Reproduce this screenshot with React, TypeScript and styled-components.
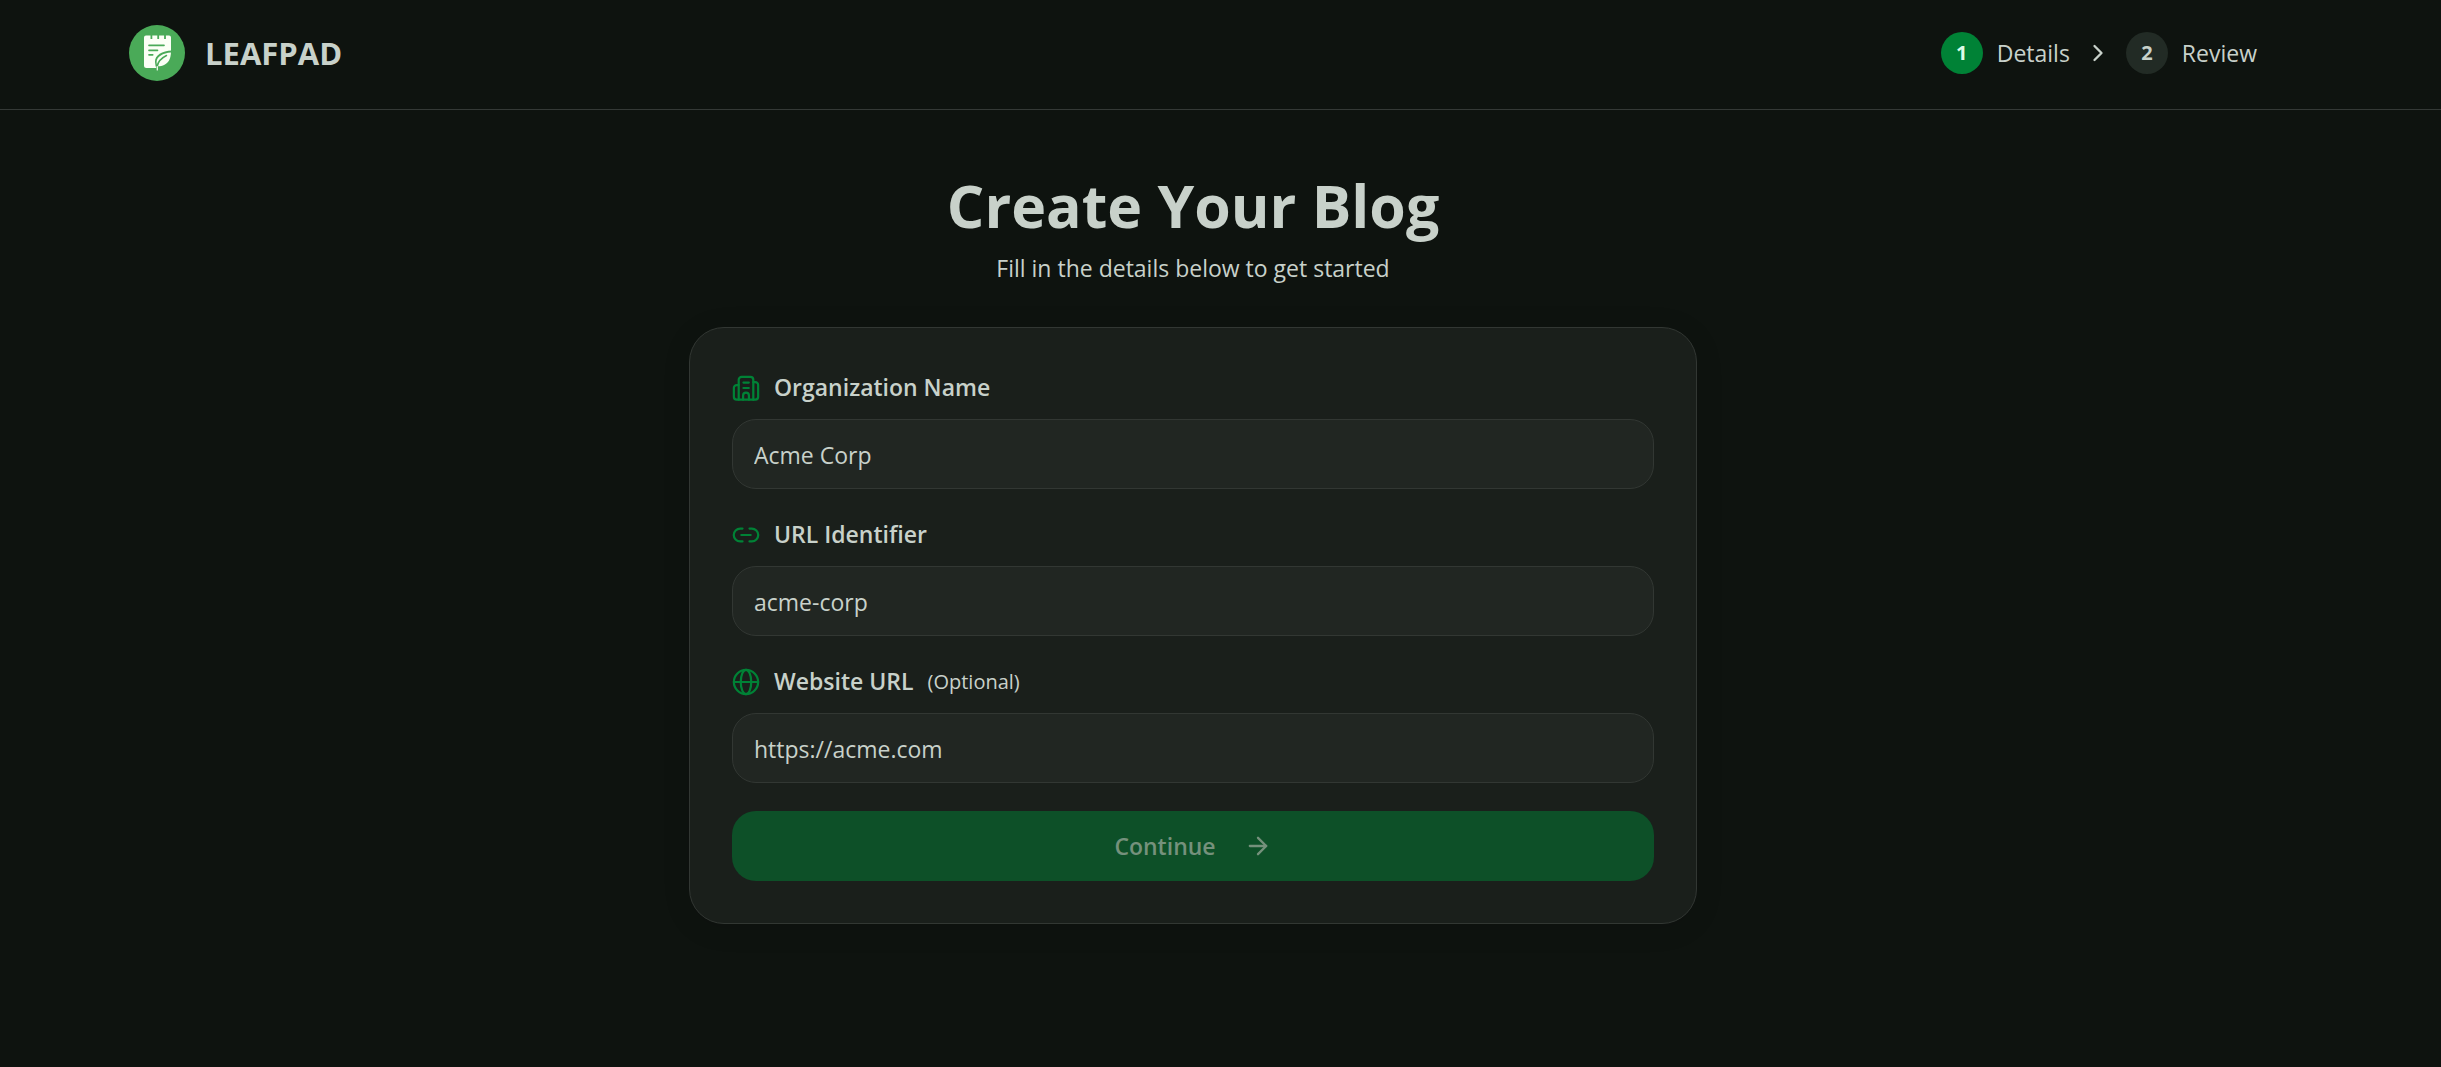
import React from "react";
import styled, { createGlobalStyle } from "styled-components";
import { ArrowRight, ChevronRight } from "lucide-react";

const GlobalStyle = createGlobalStyle`
  *, *::before, *::after { box-sizing: border-box; }
  body {
    margin: 0;
    background: #0e130f;
    color: #c8d1ca;
    font-family: "Open Sans", "Noto Sans", sans-serif;
    font-size: 23px;
  }
`;

const Page = styled.div`
  min-height: 100vh;
`;

const Header = styled.header`
  border-bottom: 1px solid #343936;
  padding: 25px 184px 28px 129px;
`;

const HeaderInner = styled.div`
  display: flex;
  align-items: center;
  justify-content: space-between;
  max-width: 2128px;
  margin: 0 auto;
`;

const Brand = styled.a`
  display: flex;
  align-items: center;
  gap: 20px;
  color: inherit;
  text-decoration: none;
  font-size: 31px;
  line-height: 56px;
  font-weight: 700;
`;

const Steps = styled.ol`
  display: flex;
  align-items: center;
  gap: 14px;
  margin: 0;
  padding: 0;
  list-style: none;
`;

const Step = styled.li`
  display: flex;
  align-items: center;
  gap: 14px;
  line-height: 42px;
`;

const StepNumber = styled.span<{ $active?: boolean }>`
  width: 42px;
  height: 42px;
  border-radius: 50%;
  background: ${(p) => (p.$active ? "#008236" : "#222b25")};
  color: ${(p) => (p.$active ? "#dcfce7" : "#c8d1ca")};
  font-size: 20px;
  font-weight: 700;
  text-align: center;
`;

const Main = styled.main`
  display: flex;
  flex-direction: column;
  align-items: center;
  padding: 60px 55px 56px 0;
`;

const Title = styled.h1`
  margin: 0;
  font-size: 59px;
  line-height: 70px;
  font-weight: 700;
`;

const Subtitle = styled.p`
  margin: 10px 0 41px;
  line-height: 36px;
`;

const Card = styled.form`
  display: flex;
  flex-direction: column;
  gap: 28px;
  width: 100%;
  max-width: 1008px;
  padding: 42px;
  border: 1px solid #323733;
  border-radius: 35px;
  background: #1a1f1b;
  box-shadow: 0 4px 28px rgba(0, 0, 0, 0.12);
`;

const Field = styled.div`
  display: flex;
  flex-direction: column;
  gap: 14px;
`;

const Label = styled.label`
  display: flex;
  align-items: center;
  gap: 14px;
  line-height: 35px;
  font-weight: 600;

  svg { color: #008236; }
`;

const Hint = styled.span`
  font-size: 20px;
  font-weight: 400;
`;

const Input = styled.input`
  width: 100%;
  height: 70px;
  padding: 2px 21px 0;
  border: 1px solid #323733;
  border-radius: 24px;
  background: #212622;
  color: inherit;
  font: inherit;

  &::placeholder { color: #c8d1ca; opacity: 1; }
`;

const Submit = styled.button`
  display: flex;
  align-items: center;
  justify-content: center;
  gap: 28px;
  height: 70px;
  border: 0;
  border-radius: 24px;
  background: #0d5028;
  color: #75917c;
  font: inherit;
  font-weight: 600;
`;

const stroke = {
  width: 28,
  height: 28,
  viewBox: "0 0 24 24",
  fill: "none",
  stroke: "currentColor",
  strokeWidth: 1.9,
  strokeLinecap: "round" as const,
  strokeLinejoin: "round" as const,
  "aria-hidden": true,
};

const BuildingIcon = () => (
  <svg {...stroke}>
    <path d="M5.750 22V5a2.500 2.500 0 0 1 2.500-2.500h7.500a2.500 2.500 0 0 1 2.500 2.500v17" />
    <path d="M5.750 9.500H4A2.400 2.400 0 0 0 1.600 12v7.600A2.400 2.400 0 0 0 4 22h16a2.400 2.400 0 0 0 2.400-2.400V9.500A2.400 2.400 0 0 0 20 7h-1.750" />
    <path d="M9.800 7.300h4.600M9.800 12h4.600M9.500 22v-3.500a2.500 2.500 0 0 1 5 0V22" />
  </svg>
);

const LinkIcon = () => (
  <svg {...stroke}>
    <path d="M9 17.500H7a5.500 5.500 0 0 1 0-11h2M15 6.500h2a5.500 5.500 0 0 1 0 11h-2M8 12h8" />
  </svg>
);

const GlobeIcon = () => (
  <svg {...stroke}>
    <circle cx="12" cy="12" r="10.400" />
    <ellipse cx="12" cy="12" rx="4.500" ry="10.400" />
    <path d="M1.600 12h20.800" />
  </svg>
);

const Logo = () => (
  <svg width="56" height="56" viewBox="0 0 56 56" aria-hidden="true">
    <circle cx="28" cy="28" r="28" fill="#4aaa58" />
    <path
      d="M17 10.500h4.500V14h1.800v-3.500h5V14h1.800v-3.500h5V14h1.800v-3.500H40q2 0 2 2V35Q38 42 30 43H17.500q-2.500 0-2.500-2.500V12.500q0-2 2-2Z"
      fill="#fbfff6"
    />
    <path
      d="M20 20.300h15M20 25.300h8.500M20 29.800h3.700"
      fill="none"
      stroke="#4aaa58"
      strokeWidth="1.700"
      strokeLinecap="round"
    />
    <path d="M43 25.500C33 26 25.800 30 26 37q.100 3.500 1.800 7L31 43.500h12Z" fill="#4aaa58" />
    <path d="M42 27.500C34 28 27.800 31.500 27.600 37q0 2 .700 3.700 2.200 1.300 5.700-.200C40 38 41.500 34 42 27.500Z" fill="#fbfff6" />
    <path d="M37.500 30.500Q29.500 34.500 28.300 41" fill="none" stroke="#4aaa58" strokeWidth="1.500" strokeLinecap="round" />
    <path d="M28.300 41.500V45" fill="none" stroke="#fbfff6" strokeWidth="1.200" strokeLinecap="round" />
  </svg>
);

export default function App() {
  return (
    <Page>
      <GlobalStyle />
      <Header>
        <HeaderInner>
          <Brand href="#">
            <Logo />
            LEAFPAD
          </Brand>
          <Steps>
            <Step>
              <StepNumber $active>1</StepNumber>
              Details
              <ChevronRight size={28} strokeWidth={2} aria-hidden />
            </Step>
            <Step>
              <StepNumber>2</StepNumber>
              Review
            </Step>
          </Steps>
        </HeaderInner>
      </Header>
      <Main>
        <Title>Create Your Blog</Title>
        <Subtitle>Fill in the details below to get started</Subtitle>
        <Card onSubmit={(e) => e.preventDefault()}>
          <Field>
            <Label htmlFor="org">
              <BuildingIcon />
              Organization Name
            </Label>
            <Input id="org" placeholder="Acme Corp" />
          </Field>
          <Field>
            <Label htmlFor="slug">
              <LinkIcon />
              URL Identifier
            </Label>
            <Input id="slug" placeholder="acme-corp" />
          </Field>
          <Field>
            <Label htmlFor="site">
              <GlobeIcon />
              Website URL <Hint>(Optional)</Hint>
            </Label>
            <Input id="site" type="url" placeholder="https://acme.com" />
          </Field>
          <Submit type="submit" disabled>
            Continue
            <ArrowRight size={28} strokeWidth={2} aria-hidden />
          </Submit>
        </Card>
      </Main>
    </Page>
  );
}
